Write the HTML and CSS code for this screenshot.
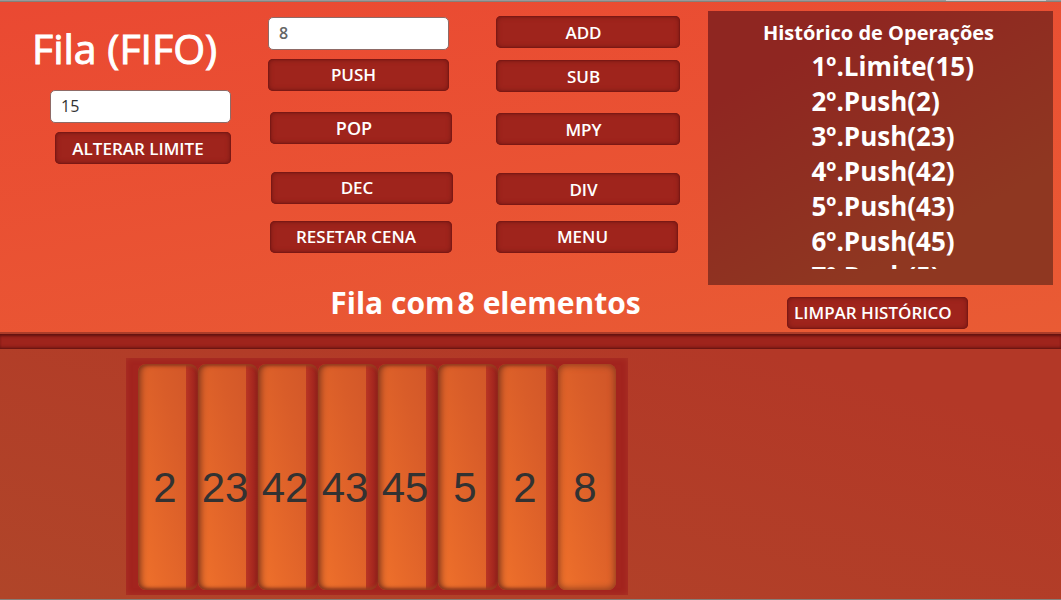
FILE: index.html
```html
<!DOCTYPE html>
<html lang="pt-BR">
<head>
<meta charset="utf-8">
<meta name="viewport" content="width=device-width, initial-scale=1">
<title>Fila (FIFO)</title>
<link rel="stylesheet" href="styles.css">
</head>
<body>
<div class="edge"><span class="edge-tab"></span></div>
<main class="scene">
  <section class="controls">
    <div class="limit">
      <h1 class="title">Fila (FIFO)</h1>
      <input class="field field-dark" type="text" value="15" aria-label="Limite">
      <button class="btn btn-limit" type="button">ALTERAR LIMITE</button>
    </div>
    <div class="stack stack-queue">
      <input class="field" type="text" value="8" aria-label="Valor">
      <button class="btn btn-push" type="button">PUSH</button>
      <button class="btn btn-pop" type="button">POP</button>
      <button class="btn btn-dec" type="button">DEC</button>
      <button class="btn btn-reset" type="button">RESETAR CENA</button>
    </div>
    <div class="stack stack-math">
      <button class="btn" type="button">ADD</button>
      <button class="btn btn-sub" type="button">SUB</button>
      <button class="btn btn-mpy" type="button">MPY</button>
      <button class="btn btn-div" type="button">DIV</button>
      <button class="btn btn-menu" type="button">MENU</button>
    </div>
    <div class="history">
      <h2 class="history-title">Histórico de Operações</h2>
      <ul class="history-list">
        <li>1º.Limite(15)</li>
        <li>2º.Push(2)</li>
        <li>3º.Push(23)</li>
        <li>4º.Push(42)</li>
        <li>5º.Push(43)</li>
        <li>6º.Push(45)</li>
        <li>7º.Push(5)</li>
      </ul>
    </div>
    <p class="status"><span>Fila com</span><span class="count">8</span><span>elementos</span></p>
    <button class="btn btn-clear" type="button">LIMPAR HISTÓRICO</button>
  </section>
  <div class="divider"></div>
  <section class="floor">
    <ol class="queue">
      <li class="slot">2</li>
      <li class="slot">23</li>
      <li class="slot">42</li>
      <li class="slot">43</li>
      <li class="slot">45</li>
      <li class="slot">5</li>
      <li class="slot">2</li>
      <li class="slot">8</li>
    </ol>
  </section>
</main>
</body>
</html>
```
FILE: styles.css
```css
* {
  box-sizing: border-box;
}

body {
  margin: 0;
  min-height: 100vh;
  display: flex;
  flex-direction: column;
  font-family: "Open Sans", "Noto Sans", sans-serif;
  color: #fff;
}

h1, h2, p, ul, ol {
  margin: 0;
  padding: 0;
}

ul, ol {
  list-style: none;
}

.edge {
  display: flex;
  justify-content: flex-end;
  height: 2px;
  padding-right: 15px;
  background: #999;
  border-bottom: 1px solid #85807a;
}

.edge-tab {
  width: 100px;
  background: #c8c8c8;
}

.scene {
  flex: 1;
  display: flex;
  flex-direction: column;
}

.controls {
  display: grid;
  grid-template-columns: minmax(0, 240fr) minmax(0, 185fr) minmax(0, 199fr) minmax(0, 345fr);
  grid-template-rows: 274px auto;
  column-gap: 28px;
  padding: 9px 8px 3px 0;
  background: linear-gradient(170deg, #ea4932, #e95b34);
}

.limit {
  display: flex;
  flex-direction: column;
  padding: 10px 9px 0 50px;
}

.title {
  margin-left: -18px;
  font-size: 41px;
  font-weight: 400;
  line-height: 54px;
  white-space: nowrap;
  -webkit-text-stroke: 1px #fff;
}

.field {
  width: 100%;
  height: 33px;
  padding: 0 10px 2px;
  border: 1px solid #8f6a66;
  border-radius: 5px;
  background: #fff;
  color: #666;
  font: 600 16px/20px "Open Sans", sans-serif;
}

.field-dark {
  margin-top: 15px;
  color: #323232;
  font-weight: 400;
}

.btn {
  height: 32px;
  flex: none;
  padding: 0;
  border: 0;
  border-radius: 5px;
  background: #9f241c;
  box-shadow: inset 0 0 1px 1px #7a1915, inset 0 0 5px 1px #7a1915;
  color: #fff;
  font: 600 17px/32px "Open Sans", sans-serif;
  text-align: center;
  white-space: nowrap;
}

.btn-limit {
  margin: 9px 0 0 5px;
  padding: 1px 10px 0 0;
}

.stack {
  display: flex;
  flex-direction: column;
}

.stack-queue {
  padding-top: 6px;
}

.stack-math {
  padding: 5px 0 0 15px;
}

.stack-queue .field {
  width: auto;
  margin-right: 4px;
}

.btn-push {
  margin: 9px 4px 0 0;
  padding: 0 10px 2px 0;
}

.btn-pop {
  margin: 21px 1px 0 2px;
  padding: 0 14px 2px 0;
  font-size: 18px;
}

.btn-dec {
  margin: 28px 0 0 3px;
  padding-right: 10px;
}

.btn-reset {
  margin: 17px 1px 0 2px;
  padding-right: 10px;
}

.stack-math .btn {
  padding: 1px 9px 0 0;
}

.btn-sub {
  margin-top: 12px;
}

.btn-mpy {
  margin-top: 21px;
}

.btn-div {
  margin-top: 28px;
}

.stack-math .btn-menu {
  margin: 16px 2px 0 0;
  padding-top: 0;
}

.history {
  padding: 8px 0 16px;
  background: linear-gradient(150deg, #8f2621 20%, #8f3721 75%);
  overflow: hidden;
}

.history-title {
  padding-right: 4px;
  font-size: 20px;
  font-weight: 700;
  line-height: 28px;
  text-align: center;
}

.history-list {
  height: 220px;
  margin-top: 2px;
  padding-left: 30%;
  overflow: hidden;
  font-size: 26px;
  font-weight: 700;
  line-height: 35px;
  white-space: nowrap;
}

.status {
  grid-column: 2 / 4;
  display: flex;
  gap: 3px;
  justify-content: center;
  padding: 0 0 9px 23px;
  align-self: end;
  font-size: 30px;
  font-weight: 700;
  line-height: 34px;
  white-space: nowrap;
}

.count {
  margin-right: 5px;
}

.btn-clear {
  grid-column: 4;
  width: 181px;
  margin: 12px 0 0 23%;
  padding-right: 10px;
}

.divider {
  height: 17px;
  border-top: 2px solid #ac3c29;
  border-bottom: 1px solid #6d1512;
  background: #9f241c;
  box-shadow: inset 0 3px 3px -1px #5e100e, inset 0 -2px 3px -1px #741814;
}

.floor {
  flex: 1;
  display: flex;
  align-items: flex-start;
  padding: 9px 0 3px 126px;
  border-bottom: 1px solid #85807a;
  background: linear-gradient(195deg, #b33827 15%, #b04529);
}

.queue {
  display: flex;
  padding: 6px 12px 5px;
  background: #a3241e;
  box-shadow: inset 0 0 5px 1px #aa3025;
}

.slot {
  width: 60px;
  height: 226px;
  padding-right: 6px;
  border-radius: 8px;
  background:
    linear-gradient(90deg, transparent 48px, #b93624 48px, #a5271f 55px, #8e201b 60px),
    linear-gradient(256deg, #cf5529, #d95d29 35%, #e96b2a 80%, #f0732c);
  box-shadow: inset 4px 0 6px -1px #87391d, inset 0 3px 3px -1px #9c3f20, inset 0 -3px 3px -1px #9c3f20;
  color: #323232;
  font: 42px/247px "Liberation Sans", sans-serif;
  text-align: center;
  white-space: nowrap;
}

.slot:last-child {
  width: 58px;
  padding-right: 4px;
  background: linear-gradient(256deg, #cf5529, #d95d29 35%, #e96b2a 80%, #f0732c);
  box-shadow: inset 0 0 7px 1px #87391d;
}
```
